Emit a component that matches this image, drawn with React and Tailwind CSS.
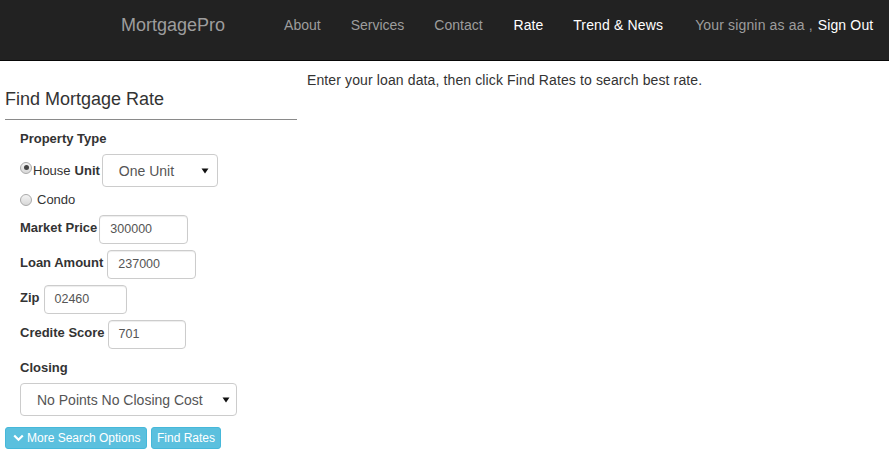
import React from "react";

function Arrow() {
  return (
    <svg width="8" height="6" viewBox="0 0 8 6" className="shrink-0">
      <path d="M0.5 0.5 L7.5 0.5 L4 5.5 Z" fill="#111" />
    </svg>
  );
}

function Radio({ checked }) {
  return (
    <span className="relative inline-block w-[12px] h-[12px] rounded-full border border-[#a9a9a9] bg-gradient-to-b from-[#f4f4f4] to-[#d8d8d8] shrink-0">
      {checked && (
        <span className="absolute left-[2.5px] top-[2.5px] w-[5px] h-[5px] rounded-full bg-[#444]" />
      )}
    </span>
  );
}

function Field({ label, value, width, ml }) {
  return (
    <div className="flex items-center h-[29px] mt-[6px]">
      <span className="font-bold text-[13px] text-[#333] leading-[18px] -mt-[3px]">{label}</span>
      <div
        className={`${width} ${ml} h-[29px] border border-[#ccc] rounded-[4px] shadow-[inset_0_1px_1px_rgba(0,0,0,0.075)] flex items-center pl-[10px] text-[12.5px] text-[#555]`}
      >
        {value}
      </div>
    </div>
  );
}

export default function App() {
  return (
    <div className="w-[889px] h-[473px] bg-white font-['Liberation_Sans',Arial,sans-serif] text-[#333] overflow-hidden">
      <header className="h-[61px] bg-[#222] border-b border-[#080808] flex items-start whitespace-nowrap">
        <div className="shrink-0 pl-[121px] pt-[14px] text-[18px] leading-[22px] text-[#9d9d9d]">MortgagePro</div>
        <nav className="shrink-0 ml-[44px] flex text-[14px] leading-[20px] pt-[15px]">
          <span className="shrink-0 px-[15px] text-[#9d9d9d]">About</span>
          <span className="shrink-0 px-[15px] text-[#9d9d9d]">Services</span>
          <span className="shrink-0 pl-[15px] pr-[16px] text-[#9d9d9d]">Contact</span>
          <span className="shrink-0 px-[15px] text-white">Rate</span>
          <span className="shrink-0 px-[15px] tracking-[0.15px] text-white">Trend &amp; News</span>
          <span className="shrink-0 pl-[17px] tracking-[0.15px] text-[#9d9d9d]">
            Your signin as aa ,<span className="ml-[5px] text-white">Sign Out</span>
          </span>
        </nav>
      </header>

      <div className="flex">
        <div className="w-[307px] pl-[5px] shrink-0">
          <div className="mt-[27px] text-[18px] leading-[22px] text-[#333]">Find Mortgage Rate</div>
          <div className="mt-[9px] w-[292px] border-t border-[#8a8a8a]" />
          <div className="pl-[15px]">
            <div className="mt-[10px] font-bold text-[13px] leading-[18px]">Property Type</div>
            <div className="mt-[6px] h-[33px] flex items-center">
              <span className="-mt-[4px]"><Radio checked /></span>
              <span className="text-[13px] leading-[18px] ml-[1px]">House</span>
              <span className="text-[13px] leading-[18px] font-bold ml-[4px]">Unit</span>
              <div className="ml-[2px] w-[116px] h-[33px] border border-[#ccc] rounded-[4px] flex items-center justify-between pl-[16px] pr-[8px] text-[14px] text-[#555]">
                <span className="mt-[1px]">One Unit</span>
                <Arrow />
              </div>
            </div>
            <div className="mt-[4px] h-[18px] flex items-center">
              <Radio />
              <span className="ml-[5px] text-[13px] leading-[18px]">Condo</span>
            </div>
            <Field label="Market Price" value="300000" width="w-[89px]" ml="ml-[2px]" />
            <Field label="Loan Amount" value="237000" width="w-[89px]" ml="ml-[4px]" />
            <Field label="Zip" value="02460" width="w-[83px]" ml="ml-[4px]" />
            <Field label="Credite Score" value="701" width="w-[78px]" ml="ml-[3px]" />
            <div className="mt-[10px] font-bold text-[13px] leading-[18px]">Closing</div>
            <div className="mt-[6px] w-[217px] h-[33px] border border-[#ccc] rounded-[4px] flex items-center justify-between pl-[16px] pr-[6px] text-[14px] text-[#555]">
              <span className="mt-[1px]">No Points No Closing Cost</span>
              <Arrow />
            </div>
          </div>
          <div className="mt-[11px] flex gap-[4px]">
            <button className="h-[22px] w-[142px] bg-[#5bc0de] border border-[#46b8da] rounded-[3px] text-white text-[12px] leading-[20px] flex items-center pl-[7px]">
              <svg width="11" height="8" viewBox="0 0 11 8" className="mr-[3px]">
                <path d="M1.2 1.5 L5.5 5.8 L9.8 1.5" stroke="white" strokeWidth="2.2" fill="none" />
              </svg>
              More Search Options
            </button>
            <button className="h-[22px] w-[70px] bg-[#5bc0de] border border-[#46b8da] rounded-[3px] text-white text-[12px] leading-[20px] flex items-center justify-center">
              Find Rates
            </button>
          </div>
        </div>
        <div className="pt-[9px] text-[14px] leading-[20px] tracking-[0.12px] text-[#333]">
          Enter your loan data, then click Find Rates to search best rate.
        </div>
      </div>
    </div>
  );
}
